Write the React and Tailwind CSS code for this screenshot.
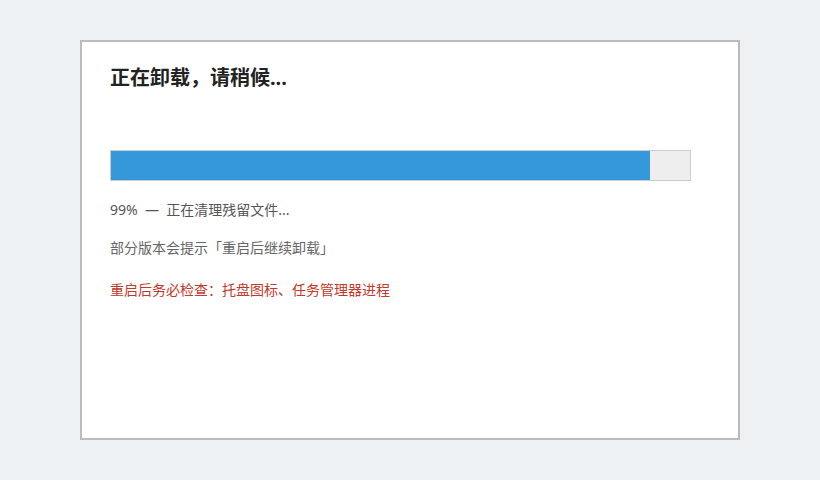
export default function App() {
  return (
    <div
      className="w-[820px] h-[480px] bg-[#eef1f4] pt-[40px] pl-[80px]"
      style={{ fontFamily: '"Noto Sans", "Noto Sans CJK SC", sans-serif' }}
    >
      <div className="w-[660px] h-[400px] bg-white border-2 border-[#bbbbbb] px-[28px] pt-[22px]">
        <h1 className="text-[20px] leading-[28px] font-bold text-[#222222]">正在卸载，请稍候...</h1>
        <div className="mt-[58px] w-[581px] h-[31px] border border-[#cccccc] bg-[#eeeeee]">
          <div className="h-full w-[539px] bg-[#3498db]"></div>
        </div>
        <p className="mt-[19px] text-[14px] leading-[20px] text-[#555555] whitespace-pre">99%  —  正在清理残留文件...</p>
        <p className="mt-[18px] text-[14px] leading-[20px] text-[#666666]">部分版本会提示「重启后继续卸载」</p>
        <p className="mt-[22px] text-[14px] leading-[20px] text-[#c0392b]">重启后务必检查：托盘图标、任务管理器进程</p>
      </div>
    </div>
  );
}
